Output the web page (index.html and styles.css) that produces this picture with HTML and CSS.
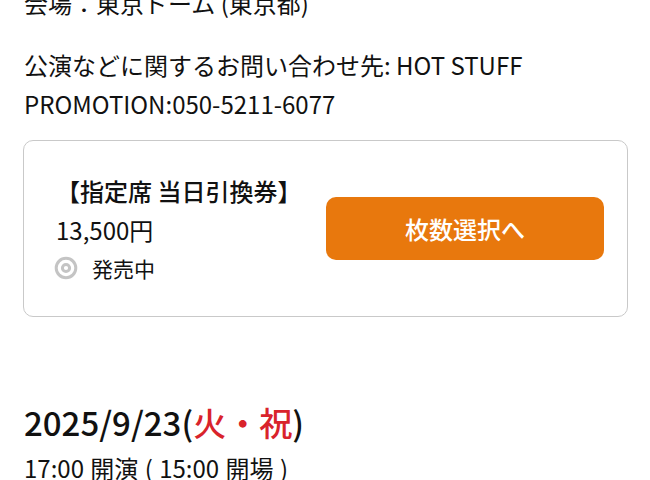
FILE: index.html
```html
<!DOCTYPE html>
<html lang="ja">
<head>
  <meta charset="UTF-8" />
  <title>公演情報</title>
  <link rel="stylesheet" href="styles.css">
</head>
<body>
  <div class="page">
    <p class="info first">会場：東京ドーム (東京都)</p>
    <p class="info">公演などに関するお問い合わせ先: HOT STUFF PROMOTION:050-5211-6077</p>

    <div class="ticket">
      <div class="ticket-info">
        <div class="ticket-name">【指定席 当日引換券】</div>
        <div class="ticket-price">13,500円</div>
        <div class="ticket-status">
          <svg class="status-icon" width="24" height="24" viewBox="0 0 24 24">
            <circle cx="12" cy="12" r="9.8" fill="none" stroke="#c4c4c4" stroke-width="3"/>
            <circle cx="12" cy="12" r="3.6" fill="none" stroke="#c4c4c4" stroke-width="3"/>
          </svg>
          <span>発売中</span>
        </div>
      </div>
      <button class="select-btn">枚数選択へ</button>
    </div>

    <h2 class="date">2025/9/23(<span class="holiday">火・祝</span>)</h2>
    <p class="time">17:00 開演 ( 15:00 開場 )</p>
  </div>
</body>
</html>
```

FILE: styles.css
```css
body {
  margin: 0;
  background: #fff;
  color: #111;
  font-family: "Noto Sans CJK JP", "Noto Sans", sans-serif;
}
.page {
  padding: 0 24px;
  width: 568px;
}
.info {
  font-size: 24px;
  line-height: 39px;
  margin: 0 0 23px;
  width: 520px;
}
.info.first {
  margin-top: -17px;
}
.ticket {
  display: flex;
  align-items: center;
  height: 177px;
  margin-top: -6px;
  border: 1px solid #c9c9c9;
  border-radius: 10px;
  padding: 0 23px 0 32px;
  box-sizing: border-box;
  width: 605px;
  margin-left: -1px;
}
.ticket-info {
  flex: 1;
}
.ticket-name {
  font-size: 24px;
  font-weight: 500;
  line-height: 39px;
}
.ticket-price {
  font-size: 24px;
  line-height: 40px;
}
.ticket-status {
  display: flex;
  align-items: center;
  gap: 14px;
  font-size: 21px;
  line-height: 36px;
}
.status-icon {
  margin-left: -2px;
}
.select-btn {
  width: 278px;
  height: 63px;
  border: none;
  border-radius: 10px;
  background: #e8780d;
  color: #fff;
  font-family: inherit;
  font-size: 24px;
  font-weight: 500;
}
.date {
  font-size: 33px;
  font-weight: 500;
  line-height: 48px;
  margin: 81px 0 2px;
}
.holiday {
  color: #d9232b;
}
.time {
  font-size: 24px;
  line-height: 39px;
  margin: 0;
  word-spacing: 1px;
}
```
